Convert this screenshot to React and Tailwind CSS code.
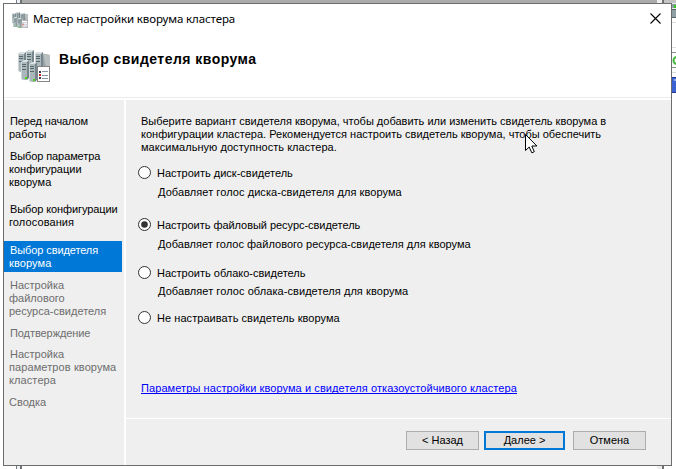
const ui = "font-['Liberation_Sans',sans-serif] text-[11px] leading-[13px]";

function Line({ children, className = "" }) {
  return <div className={`whitespace-nowrap h-[13px] ${className}`}>{children}</div>;
}

function Tower({ x, y }) {
  return (
    <g transform={`translate(${x} ${y})`}>
      <path d="M0 2 L3 0 H8 V18 L6 20 L0 19Z" fill="#76858b" />
      <path d="M0 2 H6 V20 L0 19Z" fill="#aab7bb" />
      <path d="M0 2 L3 0 H8 L6 2Z" fill="#dce3e5" />
      <path d="M1 4.5h4M1 6.5h4M1 9.5h4" stroke="#56666d" />
      <path d="M0.5 2V19" stroke="#cdd7da" />
      <rect x="4" y="17" width="2" height="2" fill="#4fd315" />
    </g>
  );
}

function ClusterIcon({ size }) {
  return (
    <svg width={size} height={size} viewBox="0 0 32 32" className="shrink-0">
      <path d="M22 3 L32 5 V18 H22Z" fill="#9aa2a5" />
      <path d="M25 4 L32 5 V17 H28Z" fill="#b9bfc1" />
      <Tower x={0} y={2} />
      <Tower x={8} y={0} />
      <Tower x={17} y={2} />
      <Tower x={3} y={10} />
      <Tower x={11} y={12} />
      <rect x="19.5" y="16.5" width="12" height="15" fill="#fff" stroke="#858585" />
      <path d="M21 21h2v2h-2z" fill="#3c3c50" />
      <path d="M21 24h2v2h-2z" fill="#d02020" />
      <path d="M21 27h2v2h-2z" fill="#3c3c50" />
      <path d="M24 21.5h6M24 25.5h6M24 28.5h6" stroke="#8a93a8" />
    </svg>
  );
}

function Radio({ label, checked, className = "", textClass = "" }) {
  return (
    <div className={`flex h-[13px] ${className}`}>
      <svg width="13" height="13" viewBox="0 0 13 13" className="shrink-0">
        <circle cx="6.5" cy="6.5" r="6" fill="#fff" stroke="#333" />
        {checked && <circle cx="6.5" cy="6.5" r="3.3" fill="#333" />}
      </svg>
      <Line className={`ml-[6px] mt-px ${textClass}`}>{label}</Line>
    </div>
  );
}

function Sidebar() {
  return (
    <div className="w-[120px] shrink-0 bg-[#efefef] pt-[15px] text-black">
      <div className="pl-[6px]">
        <Line className="tracking-[-0.12px]">Перед началом</Line>
        <Line className="-ml-px">работы</Line>
      </div>
      <div className="mt-[9px] pl-[6px]">
        <Line className="tracking-[-0.1px]">Выбор параметра</Line>
        <Line className="-ml-px">конфигурации</Line>
        <Line className="-ml-px tracking-[0.1px]">кворума</Line>
      </div>
      <div className="mt-[14px] pl-[6px]">
        <Line className="tracking-[-0.1px]">Выбор конфигурации</Line>
        <Line className="-ml-px tracking-[0.1px]">голосования</Line>
      </div>
      <div className="mt-[12px] mr-[2px] h-[31px] bg-[#0078d7] pt-[3px] pl-[6px] text-white">
        <Line className="tracking-[-0.1px]">Выбор свидетеля</Line>
        <Line className="-ml-px tracking-[0.1px]">кворума</Line>
      </div>
      <div className="text-[#6d6d6d]">
        <div className="mt-[7px] pl-[6px]">
          <Line>Настройка</Line>
          <Line className="-ml-px">файлового</Line>
          <Line className="-ml-px">ресурса-свидетеля</Line>
        </div>
        <div className="mt-[9px] pl-[6px]">
          <Line className="tracking-[-0.08px]">Подтверждение</Line>
        </div>
        <div className="mt-[8px] pl-[6px]">
          <Line>Настройка</Line>
          <Line className="-ml-px tracking-[0.1px]">параметров кворума</Line>
          <Line className="-ml-px tracking-[0.1px]">кластера</Line>
        </div>
        <div className="mt-[9px] pl-[5px]">
          <Line>Сводка</Line>
        </div>
      </div>
    </div>
  );
}

function Button({ children, primary }) {
  return (
    <button
      className={`flex items-center justify-center bg-[#e1e1e1] text-black ${
        primary ? "h-[19px] w-[81px] border-2 border-[#0078d7]" : "h-[19px] w-[73px] border border-[#adadad]"
      }`}
    >
      <span className="text-[11px] leading-[13px] whitespace-nowrap">{children}</span>
    </button>
  );
}

export default function App() {
  return (
    <div className={`relative h-[469px] w-[676px] overflow-hidden bg-white ${ui}`}>
      {/* parent window edges behind the wizard */}
      <div className="absolute top-0 left-[16px] flex h-[469px]">
        <div className="w-px bg-[#777a80]" />
        <div className="w-[3px] bg-[#eef0f8]" />
        <div className="w-[2px] bg-[#6f7175]" />
      </div>
      <div className="absolute top-0 left-[22px] h-[3px] w-[635px] bg-[#ababab]" />
      <div className="absolute top-0 left-[657px] flex h-[469px]">
        <div className="w-[5px] bg-[#eeeeee]" />
        <div className="w-[2px] bg-[#707070]" />
      </div>
      <div className="absolute top-0 left-[664px] h-[3px] w-[12px] bg-[#c4c4c4]" />
      <div className="absolute top-[3px] left-[672px] h-[15px] w-[4px] bg-[#8fa0a4]" />
      <svg className="absolute top-0 left-[672px]" width="4" height="100" viewBox="0 0 4 100">
        <path d="M0 3h4v1h-4zM0 8h4v1h-4z" fill="#e4eeee" />
        <path d="M2 5h2v3h-2z" fill="#37c51c" />
        <path d="M0 9h4v1h-4zM0 17h4v1h-4z" fill="#566367" />
        <path d="M0 22.5h4M0 47.5h4M0 72.5h4" stroke="#ddd" />
        <path d="M0 52.5h4M0 67.5h4" stroke="#8c8c8c" />
        <circle cx="5" cy="60.5" r="3.5" fill="none" stroke="#45b83c" strokeWidth="2" />
        <rect y="77" width="4" height="16" fill="#3d63d3" />
        <path d="M0 77.5h4M0 92.5h4" stroke="#24398c" />
        <path d="M2 80h2" stroke="#fff" />
      </svg>

      <div className="absolute top-[3px] left-[3px] flex h-[463px] w-[669px] flex-col border border-[#6d6d6d] bg-white">
        <div className="flex h-[31px] shrink-0 items-center pl-[8px]">
          <ClusterIcon size={16} />
          <span className="mt-[-2px] ml-[5px] flex-1 font-['Noto_Sans',sans-serif] text-[11.5px] leading-[16px] tracking-[-0.11px] whitespace-nowrap">
            Мастер настройки кворума кластера
          </span>
          <svg width="11" height="11" viewBox="0 0 11 11" className="mr-[10px] mb-[3px]">
            <path d="M0.5 0.5 L10.5 10.5 M10.5 0.5 L0.5 10.5" stroke="#000" strokeWidth="1.1" />
          </svg>
        </div>
        <div className="flex h-[62px] shrink-0 pt-[14px] pl-[14px]">
          <div className="pt-px">
            <ClusterIcon size={32} />
          </div>
          <h1 className="ml-[9px] text-[14px] leading-[20px] font-bold tracking-[0.47px] whitespace-nowrap">
            Выбор свидетеля кворума
          </h1>
        </div>
        <div className="mb-[2px] h-px shrink-0 bg-[#ececec]" />
        <div className="flex min-h-0 flex-1">
          <Sidebar />
          <div className="ml-[2px] flex flex-1 flex-col bg-[#efefef]">
            <div className="flex h-[318px] shrink-0 flex-col pt-[15px] pl-[12px]">
              <div className="pl-[3px]">
                <Line>Выберите вариант свидетеля кворума, чтобы добавить или изменить свидетель кворума в</Line>
                <Line className="tracking-[0.01px]">
                  конфигурации кластера. Рекомендуется настроить свидетель кворума, чтобы обеспечить
                </Line>
                <Line className="tracking-[0.04px]">максимальную доступность кластера.</Line>
              </div>
              <Radio className="mt-[12px]" label="Настроить диск-свидетель" />
              <Line className="mt-[7px] pl-[20px] tracking-[0.07px]">Добавляет голос диска-свидетеля для кворума</Line>
              <Radio
                className="mt-[19px]"
                checked
                label="Настроить файловый ресурс-свидетель"
                textClass="tracking-[-0.04px]"
              />
              <Line className="mt-[7px] pl-[20px] tracking-[0.03px]">
                Добавляет голос файлового ресурса-свидетеля для кворума
              </Line>
              <Radio className="mt-[15px]" label="Настроить облако-свидетель" />
              <Line className="mt-[6px] pl-[20px] tracking-[0.07px]">Добавляет голос облака-свидетеля для кворума</Line>
              <Radio className="mt-[13px]" label="Не настраивать свидетель кворума" textClass="tracking-[0.06px]" />
              <a className="mt-[58px] ml-[3px] h-[12px] self-start border-b border-[#0000ff] leading-[13px] tracking-[0.085px] whitespace-nowrap text-[#0000ff]">
                Параметры настройки кворума и свидетеля отказоустойчивого кластера
              </a>
            </div>
            <div className="h-px shrink-0 bg-white" />
            <div className="flex pt-[12px] pl-[280px]">
              <Button>&lt; Назад</Button>
              <div className="w-[5px]" />
              <Button primary>Далее &gt;</Button>
              <div className="w-[8px]" />
              <Button>Отмена</Button>
            </div>
          </div>
        </div>
      </div>

      {/* mouse pointer */}
      <svg className="absolute top-[134px] left-[525px]" width="13" height="20" viewBox="0 0 13 20">
        <path
          d="M0.5 0.5 V16.5 L4.2 13 L6.8 18.8 L9.3 17.7 L6.8 12 H11.9Z"
          fill="#fff"
          stroke="#000"
          strokeWidth="1"
        />
      </svg>
    </div>
  );
}
